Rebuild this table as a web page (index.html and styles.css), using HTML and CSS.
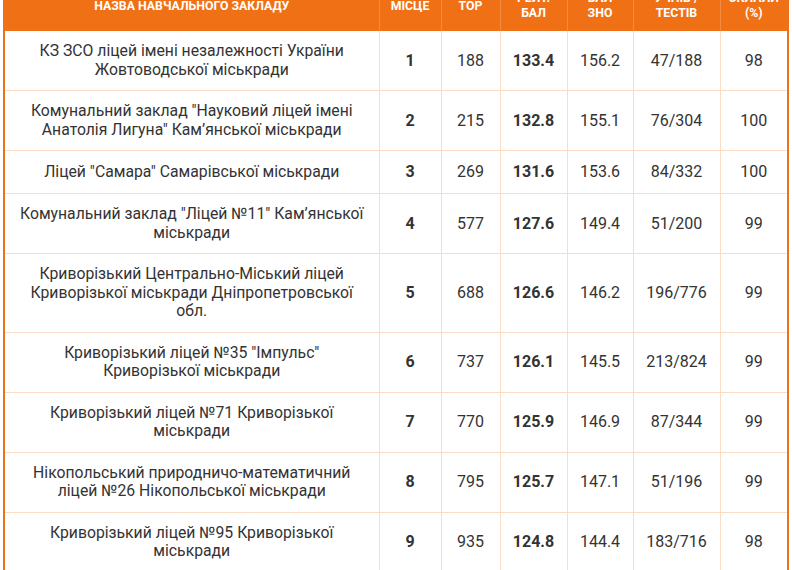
FILE: index.html
```html
<!DOCTYPE html>
<html lang="uk">
<head>
<meta charset="utf-8">
<link rel="stylesheet" href="styles.css">
</head>
<body>
<div class="wrap">
<table class="rating">
  <colgroup>
    <col class="c-name"><col class="c-place"><col class="c-top"><col class="c-score"><col class="c-zno"><col class="c-tests"><col class="c-pass">
  </colgroup>
  <thead>
    <tr>
      <th>Назва навчального закладу</th>
      <th>Місце</th>
      <th>TOP</th>
      <th>Рейт.<br>бал</th>
      <th>Бал<br>ЗНО</th>
      <th>Учнів /<br>тестів</th>
      <th>Склали<br>(%)</th>
    </tr>
  </thead>
  <tbody>
    <tr><td class="name">КЗ ЗСО ліцей імені незалежності України Жовтоводської міськради</td><td class="b">1</td><td>188</td><td class="b">133.4</td><td>156.2</td><td>47/188</td><td>98</td></tr>
    <tr><td class="name">Комунальний заклад "Науковий ліцей імені Анатолія Лигуна" Кам’янської міськради</td><td class="b">2</td><td>215</td><td class="b">132.8</td><td>155.1</td><td>76/304</td><td>100</td></tr>
    <tr><td class="name">Ліцей "Самара" Самарівської міськради</td><td class="b">3</td><td>269</td><td class="b">131.6</td><td>153.6</td><td>84/332</td><td>100</td></tr>
    <tr><td class="name">Комунальний заклад "Ліцей №11" Кам’янської міськради</td><td class="b">4</td><td>577</td><td class="b">127.6</td><td>149.4</td><td>51/200</td><td>99</td></tr>
    <tr><td class="name">Криворізький Центрально-Міський ліцей Криворізької міськради Дніпропетровської обл.</td><td class="b">5</td><td>688</td><td class="b">126.6</td><td>146.2</td><td>196/776</td><td>99</td></tr>
    <tr><td class="name">Криворізький ліцей №35 "Імпульс" Криворізької міськради</td><td class="b">6</td><td>737</td><td class="b">126.1</td><td>145.5</td><td>213/824</td><td>99</td></tr>
    <tr><td class="name">Криворізький ліцей №71 Криворізької міськради</td><td class="b">7</td><td>770</td><td class="b">125.9</td><td>146.9</td><td>87/344</td><td>99</td></tr>
    <tr><td class="name">Нікопольський природничо-математичний ліцей №26 Нікопольської міськради</td><td class="b">8</td><td>795</td><td class="b">125.7</td><td>147.1</td><td>51/196</td><td>99</td></tr>
    <tr><td class="name">Криворізький ліцей №95 Криворізької міськради</td><td class="b">9</td><td>935</td><td class="b">124.8</td><td>144.4</td><td>183/716</td><td>98</td></tr>
  </tbody>
</table>
</div>
</body>
</html>
```
FILE: styles.css
```css
html, body {
  margin: 0;
  padding: 0;
  background: #ffffff;
  overflow: hidden;
}
.wrap {
  margin-top: -23px;
  margin-left: 3px;
  width: 786px;
}
.rating {
  width: 786px;
  border-collapse: collapse;
  table-layout: fixed;
  font-family: Roboto, "Liberation Sans", sans-serif;
  color: #333333;
  border-left: 2px solid #f07016;
  border-right: 2px solid #f07016;
}
.c-name { width: 375px; }
.c-place { width: 62px; }
.c-top { width: 59px; }
.c-score { width: 67px; }
.c-zno { width: 66px; }
.c-tests { width: 87px; }
.c-pass { width: 68px; }
.rating th {
  box-sizing: border-box;
  background: #f07016;
  color: #ffffff;
  font-weight: 700;
  font-size: 12.3px;
  line-height: 15px;
  text-transform: uppercase;
  text-align: center;
  padding: 14px 2px 10px;
  border-left: 1px solid #f48a40;
  height: 54px;
}
.rating th:first-child { border-left: none; }
.rating td {
  box-sizing: border-box;
  text-align: center;
  vertical-align: middle;
  font-size: 16px;
  line-height: 20px;
  padding: 11px 2px;
  border: 1px solid #fcdcc4;
  border-top: none;
}
.rating td:first-child { border-left: none; }
.rating td:last-child { border-right: none; }
.rating td.name {
  font-size: 15.75px;
  line-height: 18.5px;
  padding: 11px 12px;
}
.rating td.b { font-weight: 700; }
```
